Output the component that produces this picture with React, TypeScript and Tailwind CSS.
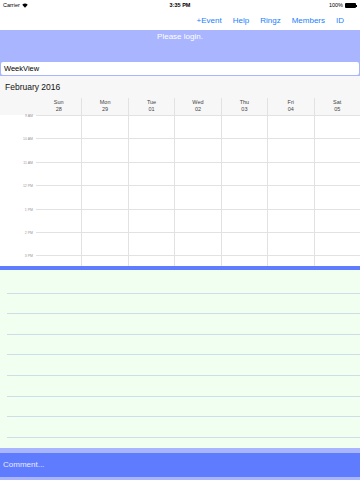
import React from "react";

const days = [
  { name: "Sun", date: "28" },
  { name: "Mon", date: "29" },
  { name: "Tue", date: "01" },
  { name: "Wed", date: "02" },
  { name: "Thu", date: "03" },
  { name: "Fri", date: "04" },
  { name: "Sat", date: "05" },
];

const hours = ["9 AM", "10 AM", "11 AM", "12 PM", "1 PM", "2 PM", "3 PM"];

const links = ["+Event", "Help", "Ringz", "Members", "ID"];

function StatusBar() {
  return (
    <div className="flex h-[11px] items-center justify-between px-[3px] text-[5.5px] text-black">
      <div className="flex w-[60px] items-center gap-[2px]">
        <span>Carrier</span>
        <svg width="6" height="5" viewBox="0 0 12 9">
          <path d="M6 9 L0.5 3 A8 8 0 0 1 11.5 3 Z" fill="#000" />
        </svg>
      </div>
      <span className="font-semibold">3:35 PM</span>
      <div className="flex w-[60px] items-center justify-end gap-[2px]">
        <span>100%</span>
        <div className="flex items-center">
          <div className="h-[5px] w-[11px] rounded-[1px] bg-black" />
          <div className="h-[2px] w-[1px] bg-black" />
        </div>
      </div>
    </div>
  );
}

function Calendar() {
  return (
    <div className="bg-white">
      <div className="bg-[#f7f7f7]">
        <div className="h-[22px] pl-[5px] pt-[6px] text-[8.5px] leading-[10px] text-[#111]">February 2016</div>
        <div className="flex h-[17px]">
          <div className="w-[36px]" />
          {days.map((d, i) => (
            <div
              key={d.name}
              className={
                (i === 0 ? "" : "border-l ") +
                "flex flex-1 flex-col items-center border-[#e2e2e2] pt-[1px] text-[5.5px] leading-[6.5px] text-[#444]"
              }
            >
              <span>{d.name}</span>
              <span>{d.date}</span>
            </div>
          ))}
        </div>
      </div>
      <div>
        {hours.map((h, r) => (
          <div key={h} className={r === hours.length - 1 ? "flex h-[10.6px]" : "flex h-[23.4px]"}>
            <div className="relative w-[36px]">
              <span className="absolute right-[3px] top-[-1px] text-[3.5px] leading-[4px] text-[#999]">{h}</span>
            </div>
            {days.map((d, i) => (
              <div
                key={d.name}
                className={
                  i === 0
                    ? "flex-1 border-t border-[#e2e2e2]"
                    : "flex-1 border-l border-t border-[#e2e2e2]"
                }
              />
            ))}
          </div>
        ))}
      </div>
    </div>
  );
}

function Notes() {
  return (
    <div className="h-[178px] bg-[#f0fff0] pl-[7px] pt-[3px]">
      {Array.from({ length: 8 }).map((_, i) => (
        <div key={i} className="h-[20.6px] border-b border-[#cfdde8]" />
      ))}
    </div>
  );
}

export default function App() {
  return (
    <div
      className="flex h-[480px] w-[360px] flex-col overflow-hidden bg-white"
      style={{ fontFamily: '"Liberation Sans", Arial, sans-serif' }}
    >
      <StatusBar />
      <div className="flex h-[19px] items-center justify-end gap-[11px] pr-[16px] text-[8px] text-[#1a7ffb]">
        {links.map((l) => (
          <span key={l}>{l}</span>
        ))}
      </div>
      <div className="h-[46px] bg-[#aab5ff] px-[1px] pt-[1px]">
        <div className="text-center text-[8px] text-white">Please login.</div>
        <div className="mt-[19px] flex h-[13px] items-center rounded-[2px] bg-white pl-[3px] text-[7.5px] text-black">
          WeekView
        </div>
      </div>
      <Calendar />
      <div className="h-[4px] shrink-0 bg-[#5f7cff]" />
      <Notes />
      <div className="h-[5px] shrink-0 bg-[#a9b6ff]" />
      <div className="flex h-[24px] shrink-0 items-center bg-[#5f7cff] pl-[3px] text-[8px] text-[#e6eaff]">
        Comment...
      </div>
      <div className="flex-1 bg-[#a9b6ff]" />
    </div>
  );
}
